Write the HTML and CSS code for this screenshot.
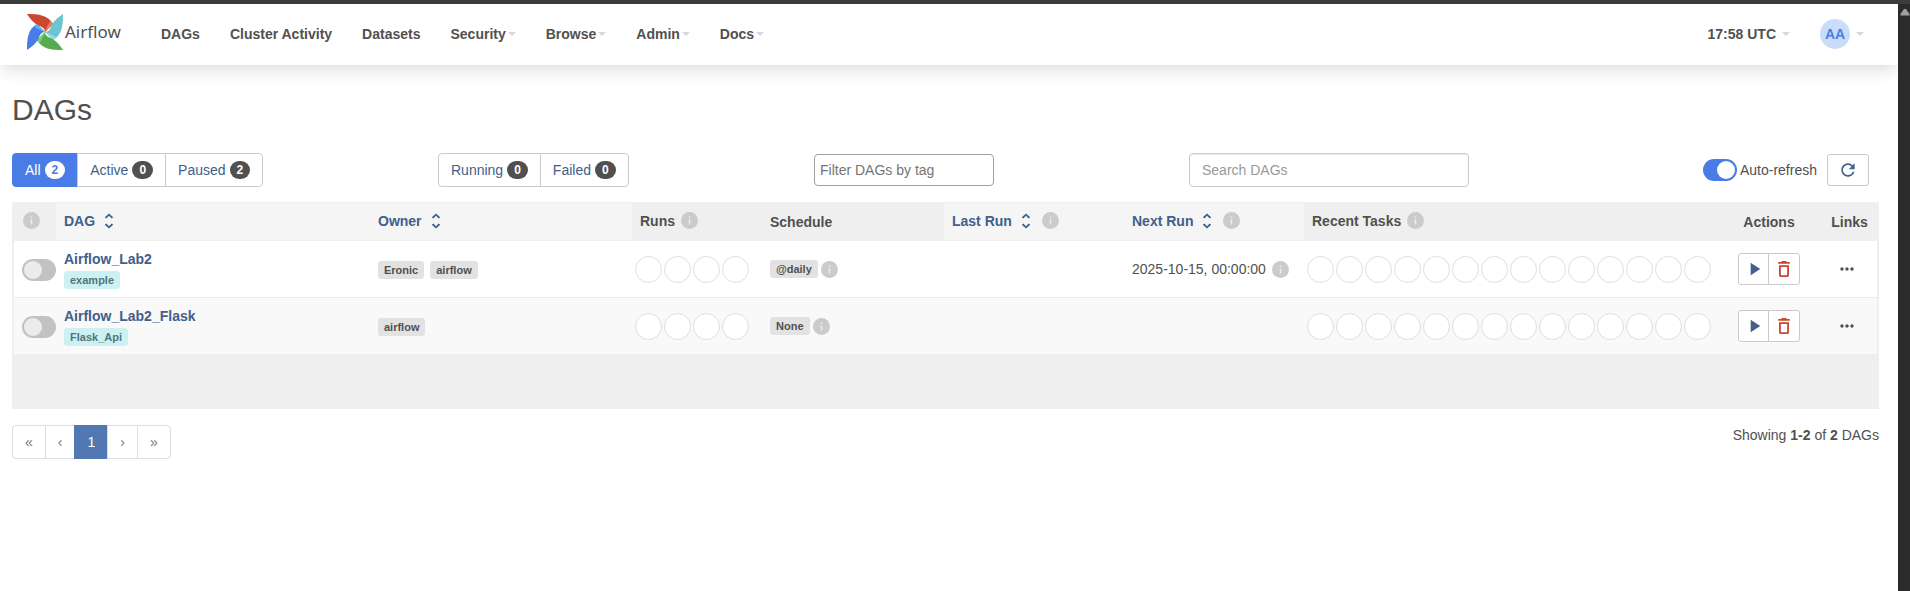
FILE: index.html
```html
<!DOCTYPE html>
<html lang="en">
<head>
<meta charset="utf-8">
<title>DAGs - Airflow</title>
<link rel="stylesheet" href="styles.css">
</head>
<body>
<svg class="sprite" aria-hidden="true">
  <symbol id="blade" viewBox="0 0 36 36"><path d="M0 0C12 0 21 1 26 10L18 18C18 15 16 13 11 11.500C7 9 3 5 0 0z"/></symbol>
  <symbol id="fold" viewBox="0 0 36 36"><path d="M18 18C19 14 21 11 23.500 6.500L26 10z"/></symbol>
  <symbol id="info" viewBox="0 0 17 17"><circle cx="8.500" cy="8.500" r="8.500" fill="#cbcbcb"/><path d="M8.500 7.500v5M8.500 4.500v1.500" stroke="#f0efef" stroke-width="1.500"/></symbol>
  <symbol id="sort" viewBox="0 0 24 24"><path d="M12 5.830L15.170 9l1.910-1.410L12 3 6.920 7.590 8.830 9 12 5.830zm0 12.340L8.830 15l-1.910 1.410L12 21l5.090-4.590L15.170 15 12 18.170z"/></symbol>
  <symbol id="play" viewBox="0 0 24 24"><path d="M8 4.500v15l11.500-7.500z"/></symbol>
  <symbol id="trash" viewBox="0 0 24 24"><path d="M6 19.500c0 1.100.9 2 2 2h8c1.100 0 2-.9 2-2V7.500H6v12zM8.200 9.500h7.600v10H8.200v-10zM15.500 3.500l-1-1h-5l-1 1H5v2.200h14V3.500z"/></symbol>
  <symbol id="more" viewBox="0 0 24 24"><path d="M6 10c-1.100 0-2 .9-2 2s.9 2 2 2 2-.9 2-2-.9-2-2-2zm12 0c-1.100 0-2 .9-2 2s.9 2 2 2 2-.9 2-2-.9-2-2-2zm-6 0c-1.100 0-2 .9-2 2s.9 2 2 2 2-.9 2-2-.9-2-2-2z"/></symbol>
  <symbol id="refresh" viewBox="0 0 24 24"><path d="M17.650 6.350C16.200 4.900 14.210 4 12 4c-4.420 0-7.990 3.580-7.990 8s3.570 8 7.990 8c3.730 0 6.840-2.550 7.730-6h-2.080c-.82 2.330-3.040 4-5.650 4-3.310 0-6-2.690-6-6s2.690-6 6-6c1.660 0 3.140.69 4.220 1.780L13 11h7V4l-2.350 2.350z"/></symbol>
</svg>
<div class="window-edge"></div>
<div class="window">
  <div class="page">
    <nav class="nav">
      <a class="brand" href="#">
        <svg width="36" height="36" viewBox="0 0 36 36" aria-hidden="true">
          <g><use href="#blade" fill="#cb4731"/><use href="#fold" fill="#e67d5f"/></g>
          <g transform="rotate(90 18 18)"><use href="#blade" fill="#6cc5d0"/><use href="#fold" fill="#90ddd9"/></g>
          <g transform="rotate(180 18 18)"><use href="#blade" fill="#57a952"/><use href="#fold" fill="#76d463"/></g>
          <g transform="rotate(270 18 18)"><use href="#blade" fill="#4a7ce8"/><use href="#fold" fill="#63adf6"/></g>
        </svg>
        <span>Airflow</span>
      </a>
      <a class="nav-link" href="#">DAGs</a>
      <a class="nav-link" href="#">Cluster Activity</a>
      <a class="nav-link" href="#">Datasets</a>
      <a class="nav-link" href="#">Security<span class="caret"></span></a>
      <a class="nav-link" href="#">Browse<span class="caret"></span></a>
      <a class="nav-link" href="#">Admin<span class="caret"></span></a>
      <a class="nav-link" href="#">Docs<span class="caret"></span></a>
      <div class="nav-right">
        <a class="nav-link spaced" href="#">17:58 UTC<span class="caret"></span></a>
        <a class="nav-link spaced" href="#"><span class="avatar">AA</span><span class="caret"></span></a>
      </div>
    </nav>
    <main class="main">
      <h1 class="title">DAGs</h1>
      <div class="filters">
        <div class="group">
          <a class="btn active" href="#">All <span class="badge">2</span></a>
          <a class="btn" href="#">Active <span class="badge">0</span></a>
          <a class="btn" href="#">Paused <span class="badge">2</span></a>
        </div>
        <div class="group">
          <a class="btn" href="#">Running <span class="badge">0</span></a>
          <a class="btn" href="#">Failed <span class="badge">0</span></a>
        </div>
        <div><input class="tag-input" type="text" placeholder="Filter DAGs by tag" aria-label="Filter DAGs by tag"></div>
        <div><input class="search-input" type="text" placeholder="Search DAGs" aria-label="Search DAGs"></div>
        <div class="refresh">
          <label class="auto"><input class="switch" type="checkbox" checked>Auto-refresh</label>
          <button class="refresh-btn" type="button" aria-label="Refresh"><svg class="icon"><use href="#refresh"/></svg></button>
        </div>
      </div>
      <div class="table-wrap">
      <table class="dags">
        <colgroup><col class="c-toggle"><col class="c-dag"><col class="c-owner"><col class="c-runs"><col class="c-schedule"><col class="c-run"><col class="c-run"><col class="c-tasks"><col class="c-actions"><col class="c-links"></colgroup>
        <thead>
          <tr>
            <th class="toggle-head"><svg class="info"><use href="#info"/></svg></th>
            <th class="sortable"><a href="#">DAG<svg class="icon sort"><use href="#sort"/></svg></a></th>
            <th class="sortable"><a href="#">Owner<svg class="icon sort"><use href="#sort"/></svg></a></th>
            <th>Runs<svg class="info after"><use href="#info"/></svg></th>
            <th>Schedule</th>
            <th class="sortable"><a href="#">Last Run<svg class="icon sort"><use href="#sort"/></svg></a><svg class="info after"><use href="#info"/></svg></th>
            <th class="sortable"><a href="#">Next Run<svg class="icon sort"><use href="#sort"/></svg></a><svg class="info after"><use href="#info"/></svg></th>
            <th>Recent Tasks<svg class="info after"><use href="#info"/></svg></th>
            <th class="center">Actions</th>
            <th class="center">Links</th>
          </tr>
        </thead>
        <tbody>
          <tr>
            <td class="center"><input class="switch" type="checkbox" aria-label="Toggle Airflow_Lab2"></td>
            <td><a class="dag-name" href="#">Airflow_Lab2</a><a class="tag" href="#">example</a></td>
            <td><div class="labels"><a class="label" href="#">Eronic</a><a class="label" href="#">airflow</a></div></td>
            <td class="circles"><div class="dots"><i></i><i></i><i></i><i></i></div></td>
            <td><div class="sched"><a class="label" href="#">@daily</a><svg class="info"><use href="#info"/></svg></div></td>
            <td></td>
            <td><div class="next"><time>2025-10-15, 00:00:00</time><svg class="info"><use href="#info"/></svg></div></td>
            <td class="circles"><div class="dots"><i></i><i></i><i></i><i></i><i></i><i></i><i></i><i></i><i></i><i></i><i></i><i></i><i></i><i></i></div></td>
            <td><div class="actions"><button class="act" type="button" aria-label="Trigger DAG"><svg class="icon"><use href="#play"/></svg></button><button class="act danger" type="button" aria-label="Delete DAG"><svg class="icon"><use href="#trash"/></svg></button></div></td>
            <td class="center links"><a class="more" href="#" aria-label="Links"><svg class="icon"><use href="#more"/></svg></a></td>
          </tr>
          <tr>
            <td class="center"><input class="switch" type="checkbox" aria-label="Toggle Airflow_Lab2_Flask"></td>
            <td><a class="dag-name" href="#">Airflow_Lab2_Flask</a><a class="tag" href="#">Flask_Api</a></td>
            <td><div class="labels"><a class="label" href="#">airflow</a></div></td>
            <td class="circles"><div class="dots"><i></i><i></i><i></i><i></i></div></td>
            <td><div class="sched"><a class="label" href="#">None</a><svg class="info"><use href="#info"/></svg></div></td>
            <td></td>
            <td></td>
            <td class="circles"><div class="dots"><i></i><i></i><i></i><i></i><i></i><i></i><i></i><i></i><i></i><i></i><i></i><i></i><i></i><i></i></div></td>
            <td><div class="actions"><button class="act" type="button" aria-label="Trigger DAG"><svg class="icon"><use href="#play"/></svg></button><button class="act danger" type="button" aria-label="Delete DAG"><svg class="icon"><use href="#trash"/></svg></button></div></td>
            <td class="center links"><a class="more" href="#" aria-label="Links"><svg class="icon"><use href="#more"/></svg></a></td>
          </tr>
        </tbody>
      </table>
      </div>
      <div class="footer">
        <div class="pager">
          <a href="#">«</a><a href="#">‹</a><a class="current" href="#">1</a><a href="#">›</a><a href="#">»</a>
        </div>
        <div class="showing">Showing <strong>1-2</strong> of <strong>2</strong> DAGs</div>
      </div>
    </main>
  </div>
  <div class="scrollbar"><svg width="10" height="8" viewBox="0 0 10 8" aria-hidden="true"><path d="M4 1h2l3.500 5v1.500h-9V6z" fill="#9f9f9f"/></svg></div>
</div>
</body>
</html>
```

FILE: styles.css
```css
* { box-sizing: border-box; }
body {
  margin: 0;
  min-height: 100vh;
  display: flex;
  flex-direction: column;
  font: 14px/20px "Liberation Sans", Arial, sans-serif;
  color: #51504f;
  background: #fff;
}
a { color: #41608a; text-decoration: none; }
.sprite { display: none; }
.window-edge { height: 4px; background: #3b3b3b; }
.window { flex: 1; display: flex; }
.page { flex: 1; min-width: 0; overflow: hidden; }
.scrollbar {
  width: 12px;
  padding: 4px 0 0 2px;
  background: #2b2b2b;
}
.scrollbar svg { display: block; }

.nav {
  display: flex;
  align-items: center;
  height: 61px;
  padding: 0 19px 2px 27px;
  background: #fff;
  box-shadow: 0 6px 16px -2px rgba(0, 0, 0, 0.15);
}
.brand {
  display: flex;
  align-items: center;
  gap: 2px;
  width: 119px;
  padding-bottom: 3px;
  font: 17px/24px "Noto Sans", sans-serif;
  color: #51504f;
}
.nav-link {
  display: flex;
  align-items: center;
  gap: 2px;
  padding: 0 15px;
  font-weight: bold;
  color: #51504f;
}
.nav-right { display: flex; margin-left: auto; }
.spaced { gap: 6px; }
.caret {
  border: 4px solid transparent;
  border-top-color: #dfd3e2;
  border-bottom: 0;
}
.avatar {
  width: 30px;
  height: 30px;
  border-radius: 50%;
  background: #c9dcf8;
  color: #4a7ce8;
  line-height: 30px;
  text-align: center;
}

.main { padding: 25px 19px 0 12px; }
.title {
  margin: 0 0 23px;
  font-size: 30px;
  font-weight: normal;
  line-height: 40px;
}
.filters {
  display: grid;
  grid-template-columns: 426fr 376fr 375fr 300fr 390fr;
  align-items: center;
  margin-bottom: 15px;
}
.group { display: flex; }
.btn {
  display: flex;
  align-items: center;
  gap: 4px;
  height: 34px;
  padding: 0 12px;
  border: 1px solid #cbcbcb;
  background: #fff;
}
.btn + .btn { margin-left: -1px; }
.btn:first-child { border-radius: 4px 0 0 4px; }
.btn:last-child { border-radius: 0 4px 4px 0; }
.btn.active { background: #4a7ce8; border-color: #4a7ce8; color: #fff; }
.badge {
  min-width: 20px;
  height: 18px;
  padding: 0 7px;
  border-radius: 9px;
  background: #51504f;
  color: #fff;
  font-size: 12px;
  font-weight: bold;
  line-height: 18px;
}
.active .badge { background: #fff; color: #4a7ce8; }
.tag-input, .search-input {
  display: block;
  font: inherit;
  color: #51504f;
  border-radius: 4px;
  background: #fff;
}
.tag-input { width: 180px; height: 32px; padding: 0 5px; border: 1px solid #a0a0a4; }
.search-input {
  width: 280px;
  height: 34px;
  padding: 0 12px;
  border: 1px solid #cbcbcb;
  box-shadow: inset 0 1px 1px rgba(0, 0, 0, 0.08);
}
.tag-input::placeholder { color: #757575; }
.search-input::placeholder { color: #999; }
.refresh { display: flex; justify-content: flex-end; gap: 10px; padding-right: 10px; }
.auto { display: flex; align-items: center; gap: 3px; }
.refresh-btn {
  display: flex;
  align-items: center;
  justify-content: center;
  width: 42px;
  height: 32px;
  padding: 0;
  border: 1px solid #cbcbcb;
  border-radius: 3px;
  background: #fff;
  color: #41608a;
}
.switch {
  appearance: none;
  flex: none;
  display: inline-block;
  width: 34px;
  height: 22px;
  margin: 0;
  padding: 2px;
  border-radius: 11px;
  background: #c4c2c1;
  vertical-align: middle;
}
.switch::before {
  content: "";
  display: block;
  width: 18px;
  height: 18px;
  border-radius: 50%;
  background: #edecec;
}
.switch:checked { background: #4a7ce8; }
.switch:checked::before { margin-left: 12px; background: #fff; }
.icon { display: block; width: 20px; height: 20px; fill: currentColor; }
.info { display: block; width: 17px; height: 17px; }

.table-wrap {
  padding: 0 0 54px;
  border-radius: 4px 4px 0 0;
  background: #f0efef;
}
.dags { width: 100%; table-layout: fixed; border-collapse: separate; border-spacing: 0; }
.c-toggle { width: 44px; }
.c-dag { width: 314px; }
.c-owner { width: 262px; }
.c-runs { width: 130px; }
.c-schedule { width: 182px; }
.c-run { width: 180px; }
.c-tasks { width: 414px; }
.c-actions { width: 102px; }
.c-links { width: 59px; }
.dags th {
  height: 39px;
  padding: 0 8px;
  border: solid #f0efef;
  border-width: 1px 0;
  text-align: left;
  vertical-align: middle;
}
.dags th.sortable { background: #f5f5f5; }
.dags th:has(svg) { padding-bottom: 2px; }
.dags .center { text-align: center; padding: 0; }
.dags .links { padding-right: 4px; }
.dags th.toggle-head { padding-left: 11px; }
.dags th .icon { display: inline-block; vertical-align: -5px; }
.dags th .info { display: inline-block; vertical-align: -3px; }
.sort { margin-left: 4px; }
.after { margin-left: 6px; }
.dags td {
  height: 57px;
  padding: 0 8px;
  border-bottom: 1px solid #ebebeb;
  background: #fff;
  vertical-align: middle;
}
.dags td:first-child { border-left: 2px solid #f0efef; padding: 2px 0 0 8px; }
.dags td:last-child { border-right: 2px solid #f0efef; }
.dags tbody tr:nth-child(2) td { background: #f9f9f9; border-bottom-color: #f0efef; }
.dag-name { display: block; margin-bottom: 2px; font-weight: bold; line-height: 20px; }
.tag, .label {
  display: block;
  width: fit-content;
  padding: 0 6px;
  border-radius: 3px;
  font-size: 11px;
  font-weight: bold;
  line-height: 18px;
}
.tag { background: #cdf0f2; color: #4f7779; }
.label { background: #e2e2e2; color: #51504f; }
.labels { display: flex; gap: 6px; padding-top: 2px; }
.sched { display: flex; align-items: center; gap: 3px; }
.next { display: flex; align-items: center; gap: 6px; white-space: nowrap; }
.dags td.circles { padding: 0 0 0 3px; }
.dots { display: flex; gap: 2px; }
.dots i { width: 27px; height: 27px; border: 1px solid #dedede; border-radius: 50%; background: #fff; }
.actions { display: flex; justify-content: center; margin: 0 -8px; }
.act {
  display: flex;
  align-items: center;
  justify-content: center;
  width: 31px;
  height: 32px;
  padding: 0;
  border: 1px solid #cbcbcb;
  border-radius: 3px 0 0 3px;
  background: #fff;
  color: #41608a;
}
.act.danger { width: 32px; margin-left: -1px; border-radius: 0 3px 3px 0; color: #cb4731; }
.more { display: flex; justify-content: center; color: #51504f; }

.footer { display: flex; justify-content: space-between; align-items: flex-start; padding-top: 16px; }
.pager { display: flex; }
.pager a {
  height: 34px;
  padding: 0 12px;
  border: 1px solid #ddd;
  line-height: 32px;
  color: #777;
}
.pager a + a { margin-left: -1px; }
.pager a:first-child { border-radius: 4px 0 0 4px; }
.pager a:last-child { border-radius: 0 4px 4px 0; }
.pager a.current { background: #5178b2; border-color: #5178b2; color: #fff; }
```
